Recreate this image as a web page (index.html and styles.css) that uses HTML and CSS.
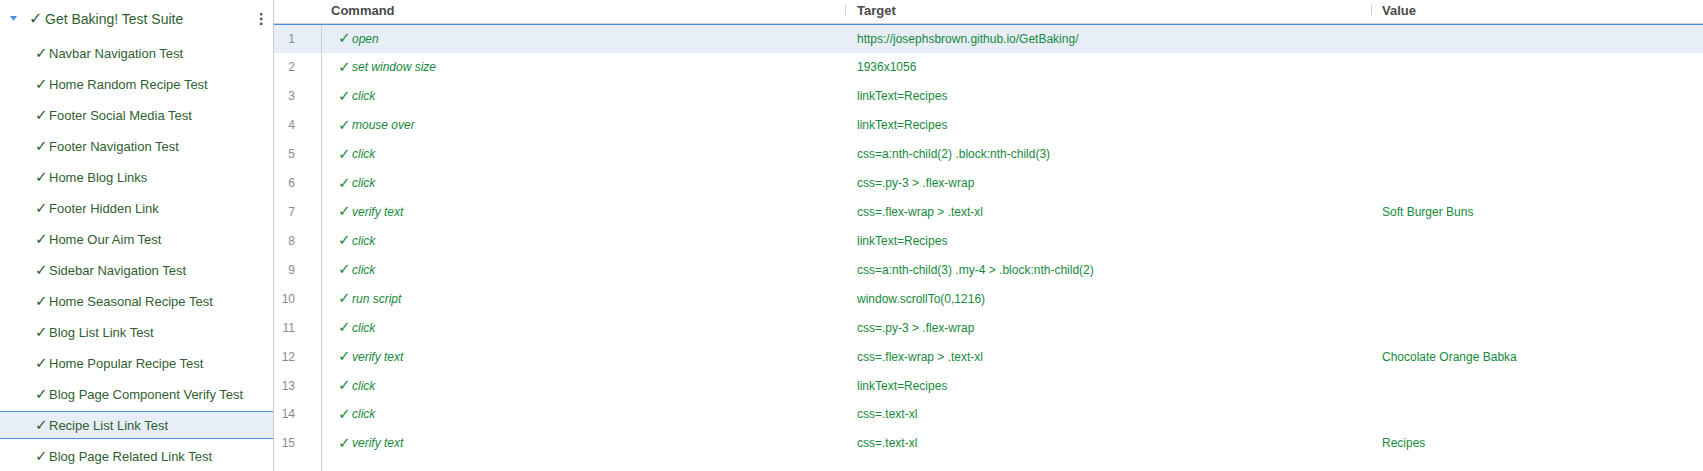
FILE: index.html
```html
<!DOCTYPE html>
<html>
<head>
<meta charset="utf-8">
<title>Get Baking! Test Suite</title>
<link rel="stylesheet" href="styles.css">
</head>
<body>
<div class="app">
  <aside class="sidebar">
    <div class="suite">
      <svg class="caret" width="7" height="5" viewBox="0 0 7 5"><path d="M0 0H7L3.5 5Z" fill="#4a90e2"/></svg>
      <span class="chk chk-suite">✓</span>
      <span class="suite-name">Get Baking! Test Suite</span>
      <svg class="kebab" width="4" height="12" viewBox="0 0 4 12"><rect x="1" y="0" width="2.4" height="2.4" fill="#555"/><rect x="1" y="4.8" width="2.4" height="2.4" fill="#555"/><rect x="1" y="9.6" width="2.4" height="2.4" fill="#555"/></svg>
    </div>
    <ul class="tests">
      <li class="test"><span class="chk">✓</span>Navbar Navigation Test</li>
      <li class="test"><span class="chk">✓</span>Home Random Recipe Test</li>
      <li class="test"><span class="chk">✓</span>Footer Social Media Test</li>
      <li class="test"><span class="chk">✓</span>Footer Navigation Test</li>
      <li class="test"><span class="chk">✓</span>Home Blog Links</li>
      <li class="test"><span class="chk">✓</span>Footer Hidden Link</li>
      <li class="test"><span class="chk">✓</span>Home Our Aim Test</li>
      <li class="test"><span class="chk">✓</span>Sidebar Navigation Test</li>
      <li class="test"><span class="chk">✓</span>Home Seasonal Recipe Test</li>
      <li class="test"><span class="chk">✓</span>Blog List Link Test</li>
      <li class="test"><span class="chk">✓</span>Home Popular Recipe Test</li>
      <li class="test"><span class="chk">✓</span>Blog Page Component Verify Test</li>
      <li class="test selected"><span class="chk">✓</span>Recipe List Link Test</li>
      <li class="test"><span class="chk">✓</span>Blog Page Related Link Test</li>
    </ul>
  </aside>
  <main class="main">
    <div class="thead">
      <div class="th th-num"></div>
      <div class="th th-cmd">Command</div>
      <div class="th"><i class="sep"></i>Target</div>
      <div class="th th-val"><i class="sep"></i>Value</div>
    </div>
    <div class="tbody">
      <div class="row active"><div class="num">1</div><div class="cmd"><span class="chk chk-cmd">✓</span>open</div><div class="tgt">https://josephsbrown.github.io/GetBaking/</div><div class="val"></div></div>
      <div class="row"><div class="num">2</div><div class="cmd"><span class="chk chk-cmd">✓</span>set window size</div><div class="tgt">1936x1056</div><div class="val"></div></div>
      <div class="row"><div class="num">3</div><div class="cmd"><span class="chk chk-cmd">✓</span>click</div><div class="tgt">linkText=Recipes</div><div class="val"></div></div>
      <div class="row"><div class="num">4</div><div class="cmd"><span class="chk chk-cmd">✓</span>mouse over</div><div class="tgt">linkText=Recipes</div><div class="val"></div></div>
      <div class="row"><div class="num">5</div><div class="cmd"><span class="chk chk-cmd">✓</span>click</div><div class="tgt">css=a:nth-child(2) .block:nth-child(3)</div><div class="val"></div></div>
      <div class="row"><div class="num">6</div><div class="cmd"><span class="chk chk-cmd">✓</span>click</div><div class="tgt">css=.py-3 &gt; .flex-wrap</div><div class="val"></div></div>
      <div class="row"><div class="num">7</div><div class="cmd"><span class="chk chk-cmd">✓</span>verify text</div><div class="tgt">css=.flex-wrap &gt; .text-xl</div><div class="val">Soft Burger Buns</div></div>
      <div class="row"><div class="num">8</div><div class="cmd"><span class="chk chk-cmd">✓</span>click</div><div class="tgt">linkText=Recipes</div><div class="val"></div></div>
      <div class="row"><div class="num">9</div><div class="cmd"><span class="chk chk-cmd">✓</span>click</div><div class="tgt">css=a:nth-child(3) .my-4 &gt; .block:nth-child(2)</div><div class="val"></div></div>
      <div class="row"><div class="num">10</div><div class="cmd"><span class="chk chk-cmd">✓</span>run script</div><div class="tgt">window.scrollTo(0,1216)</div><div class="val"></div></div>
      <div class="row"><div class="num">11</div><div class="cmd"><span class="chk chk-cmd">✓</span>click</div><div class="tgt">css=.py-3 &gt; .flex-wrap</div><div class="val"></div></div>
      <div class="row"><div class="num">12</div><div class="cmd"><span class="chk chk-cmd">✓</span>verify text</div><div class="tgt">css=.flex-wrap &gt; .text-xl</div><div class="val">Chocolate Orange Babka</div></div>
      <div class="row"><div class="num">13</div><div class="cmd"><span class="chk chk-cmd">✓</span>click</div><div class="tgt">linkText=Recipes</div><div class="val"></div></div>
      <div class="row"><div class="num">14</div><div class="cmd"><span class="chk chk-cmd">✓</span>click</div><div class="tgt">css=.text-xl</div><div class="val"></div></div>
      <div class="row"><div class="num">15</div><div class="cmd"><span class="chk chk-cmd">✓</span>verify text</div><div class="tgt">css=.text-xl</div><div class="val">Recipes</div></div>
      <div class="row filler"><div class="num"></div><div></div><div></div><div></div></div>
    </div>
  </main>
</div>
</body>
</html>
```
FILE: styles.css
```css
* { box-sizing: border-box; }
html, body { margin: 0; padding: 0; }
body {
  font-family: "Liberation Sans", Arial, sans-serif;
  background: #fff;
  overflow: hidden;
}
.app {
  display: flex;
  height: 471px;
}

/* Sidebar */
.sidebar {
  flex: none;
  width: 274px;
  border-right: 1px solid #cdcdcd;
}
.suite {
  height: 37px;
  display: flex;
  align-items: center;
  padding: 0 10px;
  color: #2f5f30;
  font-size: 14px;
}
.caret { flex: none; margin-right: 12px; }
.chk {
  display: inline-block;
  font-family: "DejaVu Sans", sans-serif;
  width: 14px;
  line-height: 1;
}
.chk-suite { width: 16px; font-size: 16px; }
.suite-name { flex: 1; }
.kebab { flex: none; }
.tests {
  list-style: none;
  margin: 0;
  padding: 2px 0 0 0;
}
.test {
  height: 28px;
  margin-bottom: 3px;
  display: flex;
  align-items: center;
  padding-left: 35px;
  font-size: 13px;
  color: #2f5f30;
  border-top: 1px solid transparent;
  border-bottom: 1px solid transparent;
}
.test .chk { font-size: 15px; }
.test.selected {
  background: #e7eef7;
  border-top-color: #4a8ee6;
  border-bottom-color: #4a8ee6;
}

/* Main table */
.main {
  flex: 1;
  display: flex;
  flex-direction: column;
  min-width: 0;
}
.thead, .row {
  display: grid;
  grid-template-columns: 48px 523px 526px 1fr;
}
.thead {
  height: 24px;
  border-bottom: 1px solid #cfcfcf;
  font-size: 13px;
  font-weight: bold;
  color: #4a4a4a;
}
.th {
  display: flex;
  align-items: center;
  padding-bottom: 3px;
}
.th-cmd { padding-left: 9px; }
.sep {
  display: inline-block;
  width: 1px;
  height: 10px;
  background: #cfcfcf;
  margin-right: 11px;
}
.th-val .sep { margin-right: 10px; }

.tbody {
  flex: 1;
  display: flex;
  flex-direction: column;
}
.row {
  height: 28.93px;
  flex: none;
  font-size: 12px;
  color: #168a3c;
}
.row.active {
  background: #e7eef7;
  border-top: 1px solid #4a8ee6;
}
.row > div {
  display: flex;
  align-items: center;
  white-space: nowrap;
}
.num {
  justify-content: flex-end;
  padding-right: 26px;
  color: #8a8a8a;
  border-right: 1px solid #cfcfcf;
}
.cmd {
  padding-left: 16px;
  font-style: italic;
}
.chk-cmd {
  font-style: normal;
  font-size: 15px;
  width: 14px;
}
.tgt { padding-left: 12px; }
.val { padding-left: 11px; }
.row.filler { flex: 1; height: auto; }
```
